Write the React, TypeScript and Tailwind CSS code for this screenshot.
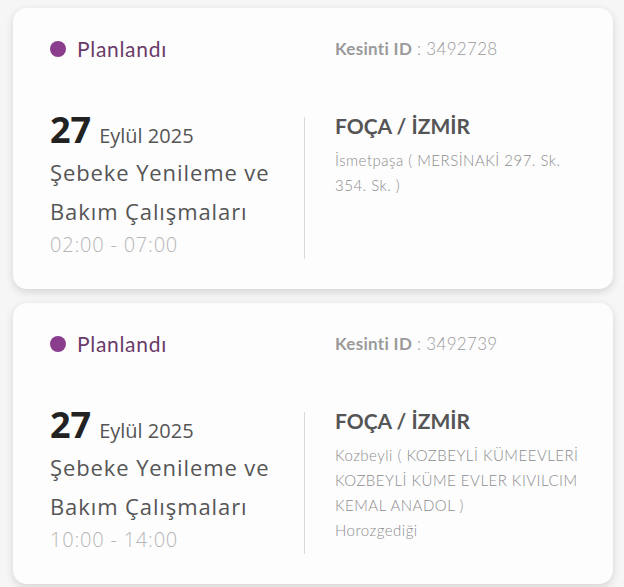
const outages = [
  {
    id: "3492728",
    time: "02:00 - 07:00",
    lines: ["İsmetpaşa ( MERSİNAKİ 297. Sk.", "354. Sk. )"],
  },
  {
    id: "3492739",
    time: "10:00 - 14:00",
    lines: ["Kozbeyli ( KOZBEYLİ KÜMEEVLERİ", "KOZBEYLİ KÜME EVLER KIVILCIM", "KEMAL ANADOL )", "Horozgediği"],
  },
];

const geo = { fontFamily: "Lato, 'Noto Sans', sans-serif" };
const hum = { fontFamily: "'Open Sans', 'Noto Sans', sans-serif" };

function OutageCard({ id, time, lines }: { id: string; time: string; lines: string[] }) {
  return (
    <div className="rounded-[14px] bg-[#fdfdfe] pb-[30px] pl-[37px] pr-6 pt-[29px] shadow-[0_3px_9px_rgba(0,0,0,0.14)]">
      <div className="grid grid-cols-[285px_1fr] items-center">
        <div className="flex items-center gap-[11px]">
          <span className="h-4 w-4 rounded-full bg-[#8a3d8c]" />
          <span style={geo} className="text-[21px] leading-6 tracking-[0.7px] text-[#6a3a68]">
            Planlandı
          </span>
        </div>
        <div style={geo} className="text-[17px] leading-6 tracking-[0.3px] text-[#9a9a9a]">
          <span className="font-bold">Kesinti ID</span>
          <span className="font-light"> : {id}</span>
        </div>
      </div>

      <div className="mt-[50px] flex">
        <div style={hum} className="w-[254px]">
          <div className="flex items-baseline gap-2">
            <span className="text-[36px] font-bold leading-[38px] text-[#222]">27</span>
            <span className="text-[20px] text-[#555]">Eylül 2025</span>
          </div>
          <div className="mt-[2px] text-[22px] leading-[39px] tracking-[0.9px] text-[#555]">
            Şebeke Yenileme ve
            <br />
            Bakım Çalışmaları
          </div>
          <div className="text-[20px] font-light leading-[28px] tracking-[0.8px] text-[#b5b5b5]">{time}</div>
        </div>
        <div className="mt-[6px] w-px self-stretch bg-[#d9d9d9]" />
        <div style={geo} className="pl-[30px]">
          <div className="text-[21px] font-bold leading-[30px] text-[#555]">FOÇA / İZMİR</div>
          <div className="mt-[7px] text-[15px] font-light leading-[25px] tracking-[0.5px] text-[#8c8c8c]">
            {lines.map((l) => (
              <div key={l}>{l}</div>
            ))}
          </div>
        </div>
      </div>
    </div>
  );
}

export default function App() {
  return (
    <div className="flex min-h-screen flex-col gap-[14px] bg-[#f6f6f7] pl-[13px] pr-[11px] pt-2">
      {outages.map((o) => (
        <OutageCard key={o.id} {...o} />
      ))}
    </div>
  );
}
